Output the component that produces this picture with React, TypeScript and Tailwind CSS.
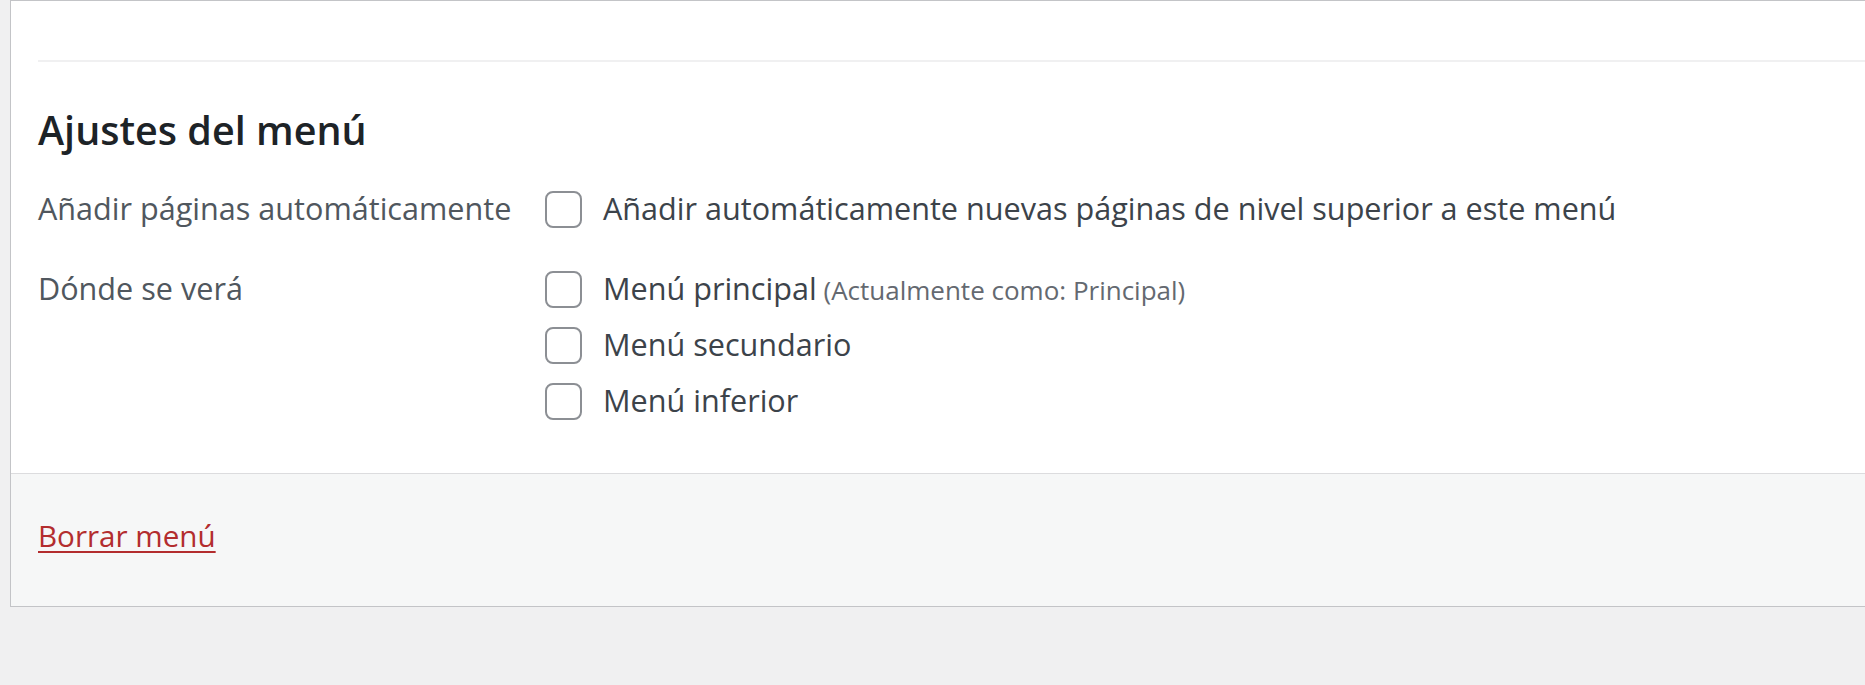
import React from 'react';

const Box = () => (
  <span className="w-[37px] h-[37px] shrink-0 rounded-[8px] border-2 border-[#8c8f94] bg-white" />
);

const Check = ({ label, note }: { label: string; note?: string }) => (
  <label className="flex items-center h-[48px] gap-[21px]">
    <Box />
    <span className="text-[30.6px] text-[#3c434a] whitespace-nowrap">
      {label}
      {note && <span className="text-[26px] text-[#646970]"> {note}</span>}
    </span>
  </label>
);

export default function App() {
  return (
    <div className="h-[685px] bg-[#f0f0f1] pl-[10px] font-['Open_Sans',sans-serif] overflow-hidden">
      <div className="bg-white border-l border-t border-b border-[#c3c4c7]">
        <div className="h-[59px]" />
        <div className="ml-[27px] border-t-2 border-[#f0f0f1] pb-[48px]">
          <h2 className="mt-[40px] h-[56px] leading-[56px] text-[39.5px] font-semibold text-[#1d2327]">
            Ajustes del menú
          </h2>

          <div className="flex mt-[27px]">
            <div className="w-[507px] h-[48px] flex items-center text-[30.6px] text-[#50575e]">
              Añadir páginas automáticamente
            </div>
            <Check label="Añadir automáticamente nuevas páginas de nivel superior a este menú" />
          </div>

          <div className="flex mt-[32px]">
            <div className="w-[507px] h-[48px] flex items-center text-[30.6px] text-[#50575e]">
              Dónde se verá
            </div>
            <div className="flex flex-col gap-[8px]">
              <Check label="Menú principal" note="(Actualmente como: Principal)" />
              <Check label="Menú secundario" />
              <Check label="Menú inferior" />
            </div>
          </div>
        </div>

        <div className="border-t border-[#dcdcde] bg-[#f6f7f7] h-[133px] pl-[27px] pt-[38px]">
          <a href="#" className="h-[48px] leading-[48px] inline-block text-[29.6px] text-[#b32d2e] underline underline-offset-[4px] decoration-2">
            Borrar menú
          </a>
        </div>
      </div>
    </div>
  );
}
